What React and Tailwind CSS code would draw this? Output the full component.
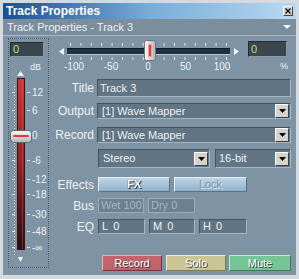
import React from "react";

const FONT = "Liberation Sans, Arial, sans-serif";
const hTicks = Array.from({ length: 16 }, (_, i) => 13 + i * 10.4);

const faderLabels = [
  { t: "12", y: 34 },
  { t: "6", y: 52 },
  { t: "0", y: 77 },
  { t: "-6", y: 102 },
  { t: "-12", y: 121 },
  { t: "-18", y: 136 },
  { t: "-30", y: 156 },
  { t: "-48", y: 173 },
  { t: "-\u221e", y: 189 },
];

function HSlider() {
  return (
    <svg width="185" height="34" className="block">
      <defs>
        <linearGradient id="hknob" x1="0" y1="0" x2="1" y2="0">
          <stop offset="0" stopColor="#fafafa" />
          <stop offset="1" stopColor="#b0b4b8" />
        </linearGradient>
      </defs>
      <polygon points="2,13.5 7,10 7,17" fill="#eef2f5" />
      {hTicks.map((x) => (
        <rect key={"a" + x} x={x} y="5" width="1" height="3" fill="#dde5ea" />
      ))}
      {hTicks.map((x) => (
        <rect key={"b" + x} x={x} y="19" width="1" height="3" fill="#dde5ea" />
      ))}
      <rect x="10" y="10" width="163" height="7" fill="#1b3245" />
      <rect x="10" y="10" width="163" height="1" fill="#0e1c28" />
      <rect x="10" y="16" width="163" height="1" fill="#b8c8d4" />
      <polygon points="177,10 177,17 182,13.5" fill="#eef2f5" />
      <rect x="87.5" y="2.5" width="11" height="20" rx="2" fill="url(#hknob)" stroke="#6c7278" />
      <rect x="91" y="6" width="4" height="13" rx="1" fill="#f39a9a" />
      <rect x="92" y="7" width="2" height="11" fill="#e33b3b" />
      <g fontFamily={FONT} fontSize="10" fill="#eef2f5" textAnchor="middle">
        <text x="17" y="32">-100</text>
        <text x="54" y="32">-50</text>
        <text x="91" y="32">0</text>
        <text x="128.5" y="32">50</text>
        <text x="165" y="32">100</text>
      </g>
    </svg>
  );
}

function VFader() {
  const dots = [];
  for (let y = 28; y <= 196; y += 3) dots.push(y);
  return (
    <svg width="39" height="209" className="block">
      <defs>
        <linearGradient id="vtrack" x1="0" y1="0" x2="0" y2="1">
          <stop offset="0" stopColor="#cf3636" />
          <stop offset="0.45" stopColor="#9a2424" />
          <stop offset="1" stopColor="#2a0c10" />
        </linearGradient>
        <linearGradient id="vknob" x1="0" y1="0" x2="0" y2="1">
          <stop offset="0" stopColor="#fbfbfb" />
          <stop offset="1" stopColor="#b2b6ba" />
        </linearGradient>
      </defs>
      <text x="21" y="12" fontFamily={FONT} fontSize="9" fill="#eef2f5">dB</text>
      <polygon points="8,18 15,18 11.5,13" fill="#f2f4f6" />
      {dots.map((y) => (
        <rect key={y} x="5" y={y} width="1" height="1" fill="#dde5ea" />
      ))}
      <rect x="8.5" y="20.5" width="7" height="171" fill="url(#vtrack)" stroke="#3a1214" />
      <rect x="13" y="21" width="1" height="170" fill="#e06060" opacity="0.4" />
      {faderLabels.map((l) => (
        <g key={l.t}>
          <rect x="3" y={l.y} width="3" height="1" fill="#dde5ea" />
          <rect x="18" y={l.y} width="3" height="1" fill="#dde5ea" />
          <text x="23" y={l.y + 3.5} fontFamily={FONT} fontSize="10" fill="#eef2f5">
            {l.t}
          </text>
        </g>
      ))}
      <rect x="1.5" y="72.5" width="21" height="12" rx="3" fill="url(#vknob)" stroke="#5e646a" />
      <rect x="4" y="77" width="16" height="2" rx="1" fill="#e23a3a" />
      <polygon points="9,199 14,199 11.5,204" fill="#f2f4f6" />
    </svg>
  );
}

function Display() {
  return (
    <div className="w-full h-full bg-[#3b454e] border border-t-[#242c32] border-l-[#242c32] border-b-[#8c9ca8] border-r-[#8c9ca8] flex items-center pl-[2px] text-[11px] leading-none text-[#c9de72]">
      0
    </div>
  );
}

function DropBtn() {
  return (
    <div className="w-[14px] h-[14px] mr-[1px] shrink-0 bg-[#d6d3ce] border border-t-white border-l-white border-b-[#404040] border-r-[#404040] flex items-center justify-center">
      <svg width="7" height="4" className="block">
        <polygon points="0,0 7,0 3.5,4" fill="#000" />
      </svg>
    </div>
  );
}

const fieldCls =
  "h-full bg-[#617585] border border-t-[#44535e] border-l-[#44535e] border-b-[#a7b7c2] border-r-[#a7b7c2] flex items-center text-[11px] leading-none text-[#eef2f5]";

function Select({ text, w, pad = "pl-[4px]" }) {
  return (
    <div className={`${fieldCls} ${w} ${pad} justify-between`}>
      <span>{text}</span>
      <DropBtn />
    </div>
  );
}

function Label({ children }) {
  return (
    <div className="w-[45px] shrink-0 text-right text-[12px] leading-none text-[#eef2f5]">
      {children}
    </div>
  );
}

function BlueBtn({ children, w, disabled }) {
  return (
    <div
      className={`${w} h-full bg-linear-to-b from-[#bdd5e7] to-[#8fb1ca] border border-t-[#e6eff6] border-l-[#e6eff6] border-b-[#587085] border-r-[#587085] flex items-center justify-center text-[11px] leading-none ${
        disabled
          ? "text-[#7a8fa0] [text-shadow:1px_1px_0_#dfe9f0]"
          : "text-white font-bold [text-shadow:0_0_1px_#1a2a36,1px_1px_0_#2a3a46]"
      }`}
    >
      {children}
    </div>
  );
}

function DimBox({ children, w }) {
  return (
    <div className={`${w} h-full bg-[#6b8090] border border-[#9aacb8] flex items-center pl-[2px] text-[11px] leading-none text-[#a9b8c3]`}>
      {children}
    </div>
  );
}

function EqBox({ band, w }) {
  return (
    <div className={`${fieldCls} ${w} pl-[3px] gap-[5px]`}>
      <span>{band}</span>
      <span>0</span>
    </div>
  );
}

function ColorBtn({ children, cls, w }) {
  return (
    <div
      className={`${w} h-full border flex items-center justify-center text-[11px] leading-none text-white [text-shadow:1px_1px_0_#3a3a3a] ${cls}`}
    >
      {children}
    </div>
  );
}

export default function App() {
  return (
    <div className="w-[299px] h-[279px] bg-[#d5dade] pt-[3px] px-[3px] pb-[4px] flex flex-col font-['Liberation_Sans',Arial,sans-serif] select-none overflow-hidden">
      {/* Title bar */}
      <div className="h-[16px] shrink-0 flex items-center justify-between bg-linear-to-r from-[#1a4f98] via-[#79acd8] to-[#b8d9f2] pl-[3px] pr-[3px]">
        <span className="text-white font-bold text-[12px] leading-none">Track Properties</span>
        <div className="w-[10px] h-[10px] bg-[#d6d3ce] border border-t-white border-l-white border-b-[#404040] border-r-[#404040] flex items-center justify-center">
          <svg width="6" height="6" className="block">
            <path d="M0.5 0.5 L5.5 5.5 M5.5 0.5 L0.5 5.5" stroke="#000" strokeWidth="1.2" />
          </svg>
        </div>
      </div>

      {/* Sub header */}
      <div className="h-[17px] shrink-0 flex items-center justify-between bg-[#7a8e9d] border-b border-[#aab9c4] pl-[4px] pr-[5px]">
        <span className="text-[#eef1f3] text-[11px] leading-none">Track Properties - Track 3</span>
        <svg width="8" height="4" className="block">
          <polygon points="0,0 8,0 4,4" fill="#f2f4f6" />
        </svg>
      </div>

      {/* Body */}
      <div className="flex-1 bg-[#7e93a3] flex">
        {/* Volume fader */}
        <div className="ml-[5px] mt-[2px] w-[41px] h-[230px] shrink-0 border border-dotted border-[#4c5e6b] flex flex-col">
          <div className="mt-[3px] ml-[1px] w-[34px] h-[15px]">
            <Display />
          </div>
          <div className="mt-[1px]">
            <VFader />
          </div>
        </div>

        {/* Main */}
        <div className="flex-1 flex flex-col pr-[5px]">
          <div className="flex items-start mt-[2px]">
            <div className="ml-[8px]">
              <HSlider />
            </div>
            <div className="ml-[6px] mt-[3px] w-[39px] flex flex-col">
              <div className="h-[16px]">
                <Display />
              </div>
              <div className="text-right text-[9px] leading-none text-[#eef2f5] mt-[5px] -mr-[1px]">%</div>
            </div>
          </div>

          <div className="flex items-center h-[18px] mt-[7px]">
            <Label>Title</Label>
            <div className={`${fieldCls} ml-[3px] w-[194px] pl-[2px]`}>Track 3</div>
          </div>

          <div className="flex items-center h-[18px] mt-[5px]">
            <Label>Output</Label>
            <div className="ml-[3px]">
              <Select text="[1] Wave Mapper" w="w-[194px] h-[18px]" />
            </div>
          </div>

          <div className="flex items-center h-[18px] mt-[6px]">
            <Label>Record</Label>
            <div className="ml-[3px]">
              <Select text="[1] Wave Mapper" w="w-[194px] h-[18px]" />
            </div>
          </div>

          <div className="flex items-center h-[19px] mt-[5px]">
            <div className="w-[45px] shrink-0" />
            <div className="ml-[4px] h-full">
              <Select text="Stereo" w="w-[112px]" />
            </div>
            <div className="ml-[5px] h-full">
              <Select text="16-bit" w="w-[76px]" pad="pl-[3px]" />
            </div>
          </div>

          <div className="flex items-center h-[15px] mt-[9px]">
            <Label>Effects</Label>
            <div className="ml-[4px] h-full flex gap-[4px]">
              <BlueBtn w="w-[72px]">FX</BlueBtn>
              <BlueBtn w="w-[73px]" disabled>Lock</BlueBtn>
            </div>
          </div>

          <div className="flex items-center h-[15px] mt-[6px]">
            <Label>Bus</Label>
            <div className="ml-[4px] h-full flex gap-[4px]">
              <DimBox w="w-[46px]">Wet 100</DimBox>
              <DimBox w="w-[47px]">Dry 0</DimBox>
            </div>
          </div>

          <div className="flex items-center h-[15px] mt-[6px]">
            <Label>EQ</Label>
            <div className="ml-[4px] h-full flex gap-[4px]">
              <EqBox band="L" w="w-[47px]" />
              <EqBox band="M" w="w-[46px]" />
              <EqBox band="H" w="w-[48px]" />
            </div>
          </div>

          <div className="flex h-[16px] mt-[21px] ml-[53px]">
            <ColorBtn w="w-[60px]" cls="bg-[#c3636d] border-t-[#eab0b6] border-l-[#eab0b6] border-b-[#7a3038] border-r-[#7a3038]">
              Record
            </ColorBtn>
            <ColorBtn w="w-[60px] ml-[4px]" cls="bg-[#cbc596] border-t-[#f0ecd0] border-l-[#f0ecd0] border-b-[#807a4c] border-r-[#807a4c]">
              Solo
            </ColorBtn>
            <ColorBtn w="w-[62px] ml-[3px]" cls="bg-[#75c597] border-t-[#bceed2] border-l-[#bceed2] border-b-[#3e7a58] border-r-[#3e7a58]">
              Mute
            </ColorBtn>
          </div>
        </div>
      </div>
    </div>
  );
}
